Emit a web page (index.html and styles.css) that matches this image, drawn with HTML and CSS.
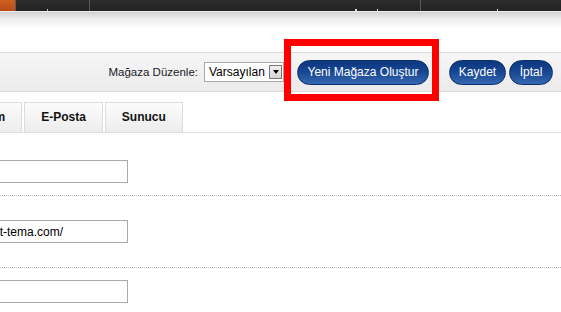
FILE: index.html
```html
<!DOCTYPE html>
<html lang="tr">
<head>
<meta charset="utf-8">
<title>Mağaza Ayarları</title>
<link rel="stylesheet" href="styles.css">
</head>
<body>
<header class="topbar">
  <div class="brand"></div>
  <div class="nav-item nav-item--a"><span class="frag frag--a"></span></div>
  <div class="nav-item nav-item--b"><span class="frag frag--b"></span><span class="frag frag--c"></span></div>
  <div class="nav-item nav-item--c"><span class="frag frag--d"></span></div>
</header>
<div class="shade"></div>

<div class="toolbar">
  <label class="tool-label" for="duzen">Mağaza Düzenle:</label>
  <div class="select-box">
    <select id="duzen" class="select"><option>Varsayılan</option></select>
    <span class="select-arrow"><span class="tri"></span></span>
  </div>
  <span class="highlight-wrap">
    <button class="btn btn--new">Yeni Mağaza Oluştur</button>
    <span class="highlight"></span>
  </span>
  <button class="btn btn--save">Kaydet</button>
  <button class="btn btn--cancel">İptal</button>
</div>

<nav class="tabs">
  <div class="tab">Tasarım</div>
  <div class="tab">E-Posta</div>
  <div class="tab">Sunucu</div>
</nav>

<div class="form">
  <div class="row"><input class="field" type="text" value=""></div>
  <div class="row row--tall"><input class="field" type="text" value="http://www.eticaret-tema.com/"></div>
  <div class="row row--last"><input class="field" type="text" value=""></div>
</div>
</body>
</html>
```

FILE: styles.css
```css
html, body {
  margin: 0;
  padding: 0;
  background: #ffffff;
  overflow: hidden;
  font-family: "Liberation Sans", Arial, sans-serif;
  font-size: 12px;
  color: #111;
}

.topbar {
  display: flex;
  height: 11px;
  background: linear-gradient(#2c2c2c, #222222);
  border-bottom: 1px solid #ececec;
}
.brand {
  width: 15px;
  background: linear-gradient(#d0601f, #b94c17);
}
.nav-item {
  position: relative;
  border-left: 1px solid #5a5a5a;
}
.nav-item--a { width: 73px; }
.nav-item--b { width: 330px; }
.nav-item--c { flex: 1; }

.frag {
  position: absolute;
  bottom: 0;
  height: 2px;
  background: #e0e0e0;
}
.frag--a { left: 31px; width: 1px; background: #9fc6ff; }
.frag--b { left: 265px; width: 2px; }
.frag--c { left: 287px; width: 1px; background: #f0d8a0; }
.frag--d { left: 76px; width: 1px; background: #ffd0a0; }

.shade {
  height: 40px;
  background: linear-gradient(#d2d2d2 0px, #ededed 7px, #ffffff 16px);
}

.toolbar {
  display: flex;
  align-items: center;
  justify-content: flex-end;
  height: 38px;
  padding-right: 8px;
  border-top: 1px solid #dadada;
  border-bottom: 1px solid #dadada;
  background: linear-gradient(#f6f6f6, #ebebeb);
}
.tool-label {
  font-size: 11.5px;
  color: #1a1a2a;
  margin-right: 6px;
}
.select-box {
  display: flex;
  align-items: center;
  height: 20px;
  box-sizing: border-box;
  border: 1px solid #a8a8a8;
  background: #fff;
  margin-right: 13px;
}
.select {
  -webkit-appearance: none;
  appearance: none;
  border: 0;
  background: transparent;
  font-family: "Liberation Sans", Arial, sans-serif;
  font-size: 12px;
  color: #000;
  padding: 0 0 0 4px;
  margin: 0;
  width: 64px;
  height: 18px;
  outline: none;
}
.select-arrow {
  display: flex;
  align-items: center;
  justify-content: center;
  width: 13px;
  height: 14px;
  margin-right: 1px;
  box-sizing: border-box;
  border: 1px solid #7a7a7a;
  background: linear-gradient(#f0f0f0, #d4d4d4);
}
.tri {
  width: 0;
  height: 0;
  border-left: 3.5px solid transparent;
  border-right: 3.5px solid transparent;
  border-top: 4px solid #000;
}

.btn {
  box-sizing: border-box;
  height: 25px;
  padding: 0;
  border: 1px solid #0a2f6e;
  border-radius: 13px;
  background: linear-gradient(#0b3780 0%, #174690 45%, #3566b0 100%);
  color: #ffffff;
  font-family: "Liberation Sans", Arial, sans-serif;
  font-size: 12px;
  line-height: 23px;
  white-space: nowrap;
  text-align: center;
  cursor: pointer;
}
.btn--new { width: 132px; }
.btn--save { width: 57px; margin-left: 20px; }
.btn--cancel { width: 44px; margin-left: 3px; }

.highlight-wrap {
  position: relative;
  display: flex;
}
.highlight {
  position: absolute;
  left: -13px;
  right: -10px;
  top: -21px;
  bottom: -16px;
  border: 7px solid #ff0000;
  pointer-events: none;
}

.tabs {
  display: flex;
  gap: 2px;
  margin-top: 10px;
  margin-left: -57px;
  border-bottom: 1px solid #dddddd;
}
.tab {
  height: 29px;
  line-height: 29px;
  padding: 0 16px;
  border: 1px solid #dcdcdc;
  border-bottom: 0;
  background: linear-gradient(#fbfbfb, #ededed);
  font-weight: bold;
  font-size: 12px;
  color: #111;
}

.form {
  margin-left: -99px;
  padding-top: 15px;
}
.row {
  display: flex;
  padding: 12px 0;
  border-bottom: 1px dotted #b8b8b8;
}
.row--tall { padding: 24px 0; }
.row--last { border-bottom: 0; }
.field {
  width: 227px;
  height: 23px;
  box-sizing: border-box;
  border: 1px solid #a9a9a9;
  padding: 0 3px;
  margin: 0;
  font-family: "Liberation Sans", Arial, sans-serif;
  font-size: 12px;
  color: #000;
  background: #fff;
  outline: none;
}
```
